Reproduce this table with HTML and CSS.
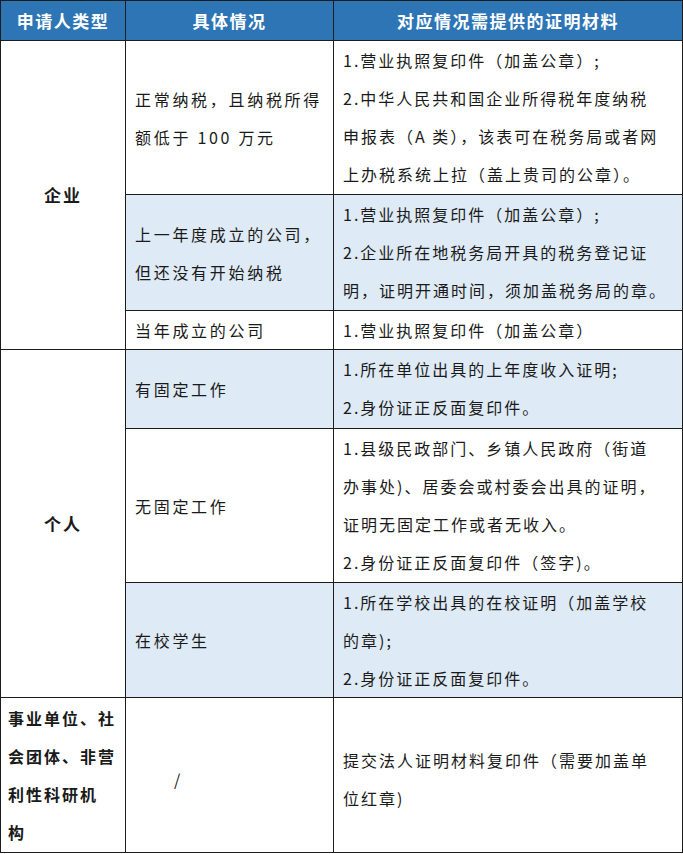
FILE: index.html
```html
<!DOCTYPE html>
<html lang="zh">
<head>
<meta charset="utf-8">
<link rel="stylesheet" href="styles.css">
</head>
<body>
<table class="tbl">
  <colgroup>
    <col class="c1"><col class="c2"><col class="c3">
  </colgroup>
  <thead>
    <tr class="head">
      <th>申请人类型</th>
      <th>具体情况</th>
      <th>对应情况需提供的证明材料</th>
    </tr>
  </thead>
  <tbody>
    <tr class="r1">
      <td class="type" rowspan="3">企业</td>
      <td class="cond">正常纳税，且纳税所得<br>额低于 100 万元</td>
      <td class="mat">1.营业执照复印件（加盖公章）;<br>2.中华人民共和国企业所得税年度纳税<br>申报表（A 类），该表可在税务局或者网<br>上办税系统上拉（盖上贵司的公章）。</td>
    </tr>
    <tr class="alt r2">
      <td class="cond">上一年度成立的公司，<br>但还没有开始纳税</td>
      <td class="mat">1.营业执照复印件（加盖公章）;<br>2.企业所在地税务局开具的税务登记证<br>明，证明开通时间，须加盖税务局的章。</td>
    </tr>
    <tr class="r3">
      <td class="cond">当年成立的公司</td>
      <td class="mat">1.营业执照复印件（加盖公章）</td>
    </tr>
    <tr class="alt r4">
      <td class="type" rowspan="3">个人</td>
      <td class="cond">有固定工作</td>
      <td class="mat">1.所在单位出具的上年度收入证明;<br>2.身份证正反面复印件。</td>
    </tr>
    <tr class="r5">
      <td class="cond">无固定工作</td>
      <td class="mat">1.县级民政部门、乡镇人民政府（街道<br>办事处)、居委会或村委会出具的证明，<br>证明无固定工作或者无收入。<br>2.身份证正反面复印件（签字)。</td>
    </tr>
    <tr class="alt r6">
      <td class="cond">在校学生</td>
      <td class="mat">1.所在学校出具的在校证明（加盖学校<br>的章);<br>2.身份证正反面复印件。</td>
    </tr>
    <tr class="r7">
      <td class="type left">事业单位、社<br>会团体、非营<br>利性科研机<br>构</td>
      <td class="cond slash">/</td>
      <td class="mat mid">提交法人证明材料复印件（需要加盖单<br>位红章)</td>
    </tr>
  </tbody>
</table>
</body>
</html>
```

FILE: styles.css
```css
html, body {
  margin: 0;
  padding: 0;
  background: #ffffff;
}
body {
  font-family: "Noto Sans CJK SC", "Noto Sans", sans-serif;
  font-size: 16px;
  color: #1a1a1a;
}
.tbl {
  border-collapse: collapse;
  table-layout: fixed;
  width: 682px;
  margin-left: 0;
}
.c1 { width: 125px; }
.c2 { width: 208px; }
.c3 { width: 349px; }
.tbl th,
.tbl td {
  border: 1px solid #1c1c1c;
  padding: 0 9px;
  line-height: 38px;
  white-space: nowrap;
  overflow: hidden;
}
.tbl .head th {
  background: #2e75b6;
  color: #ffffff;
  font-weight: 700;
  font-size: 17px;
  letter-spacing: 1.5px;
  text-align: center;
  height: 39px;
  padding: 0 4px;
}
.r1 { height: 154px; }
.r2 { height: 116px; }
.r3 { height: 39px; }
.r4 { height: 79px; }
.r5 { height: 154px; }
.r6 { height: 115px; }
.r7 { height: 155px; }
.alt .cond,
.alt .mat {
  background: #deeaf6;
}
.type {
  font-weight: 700;
  font-size: 17px;
  text-align: center;
  vertical-align: middle;
  letter-spacing: 2px;
}
.tbl .type.left {
  text-align: left;
  font-size: 16px;
  letter-spacing: 2px;
  padding-left: 7px;
  padding-right: 0;
}
.cond {
  vertical-align: middle;
  letter-spacing: 2.7px;
}
.mat {
  vertical-align: top;
  letter-spacing: 2px;
  padding-top: 2px;
}
.tbl .mat.mid {
  vertical-align: middle;
  padding-top: 8px;
}
.tbl .slash {
  padding-left: 48px;
  padding-top: 8px;
}
```
